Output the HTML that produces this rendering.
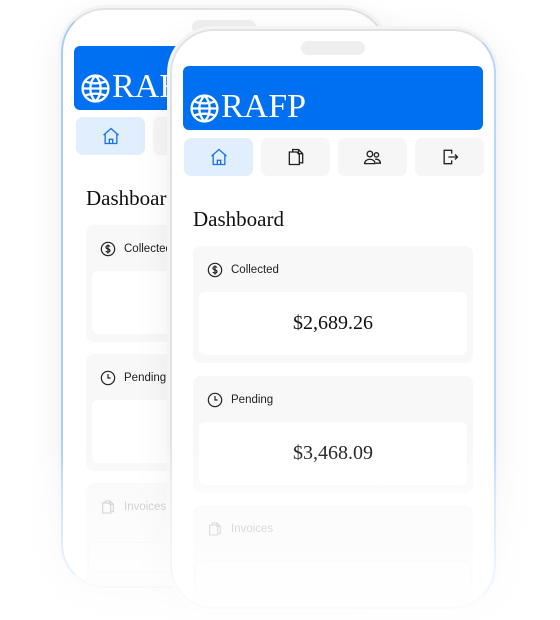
<!DOCTYPE html>
<html><head><style>
*{margin:0;padding:0;box-sizing:border-box}
body{width:560px;height:620px;background:#fff;position:relative;overflow:hidden;font-family:"Liberation Sans",sans-serif}
.ph{position:absolute;width:326px;height:580px;border-radius:44px;background:#fff;border:2px solid #e2e2e2;box-shadow:0 0 0 3px #f4f4f4,0 10px 40px rgba(0,0,0,0.07);overflow:hidden}
.ph>*{position:absolute}
.notch{left:129px;top:10px;width:64px;height:14px;border-radius:7px;background:#efefef}
.hdr{left:11px;top:35px;width:300px;height:64px;background:#0070f3;border-radius:6px;color:#fff;font-family:"Liberation Serif",serif;font-size:34px;line-height:1}
.hdr span{position:absolute;left:38px;top:24px}
.hdr svg{position:absolute;left:6px;top:27px}
.nb{top:107px;width:69px;height:38px;border-radius:7px;background:#f6f6f6;display:flex;align-items:center;justify-content:center}
.nb.a{background:#e0eefd}
.dash{left:21px;top:176px;font-family:"Liberation Serif",serif;font-size:21px;color:#111}
.card{left:21px;width:280px;height:117px;border-radius:8px;background:#f8f8f8}
.card .lb{position:absolute;left:14px;top:16px;display:flex;align-items:center;font-size:11.5px;color:#222}
.card .lb svg{margin-right:8px}
.card .in{position:absolute;left:6px;top:46px;width:268px;height:63px;background:#fff;border-radius:6px;display:flex;align-items:center;justify-content:center;font-family:"Liberation Serif",serif;font-size:20px;color:#111}
.bar{left:23px;top:530px;width:276px;height:30px;border-radius:6px;border:1px solid #eee;background:#fafafa}
.fade{position:absolute;left:0;top:0;width:560px;height:620px;background:linear-gradient(to bottom,rgba(255,255,255,0) 0,rgba(255,255,255,0) 440px,rgba(255,255,255,0.4) 490px,rgba(255,255,255,0.7) 560px,rgba(255,255,255,0.9) 620px);pointer-events:none}
</style></head><body>

<div class="ph" style="left:61px;top:8px;border-left-color:#a8cdf5">
<div class="notch"></div>
<div class="hdr" style="top:36px"><svg width="31" height="31" viewBox="0 0 24 24" fill="none" stroke="#fff" stroke-width="1.8"><circle cx="12" cy="12" r="10"/><path d="M2 12h20M12 2c3 3 4 6 4 10s-1 7-4 10M12 2c-3 3-4 6-4 10s1 7 4 10M4 6.5c5 2 11 2 16 0M4 17.5c5-2 11-2 16 0"/></svg><span>RAFP</span></div>
<div class="nb a" style="left:13px"><svg width="20" height="20" viewBox="0 0 24 24" fill="none" stroke="#1a73e8" stroke-width="1.6"><path d="M3 11l9-8 9 8M5 9.5V21h14V9.5M10 21v-5h4v5"/></svg></div>
<div class="nb" style="left:90px"></div>
<div class="dash" style="left:23px">Dashboard</div>
<div class="card" style="left:23px;top:215px"><div class="lb"><svg width="16" height="16" viewBox="0 0 24 24" fill="none" stroke="#222" stroke-width="1.8"><circle cx="12" cy="12" r="10"/><path d="M15 8.5c-.5-1-1.6-1.5-3-1.5-1.8 0-3 .9-3 2.3 0 3.2 6 1.8 6 5 0 1.4-1.3 2.3-3 2.3-1.5 0-2.6-.6-3.1-1.6M12 5v14"/></svg>Collected</div><div class="in"></div></div>
<div class="card" style="left:23px;top:344px"><div class="lb"><svg width="16" height="16" viewBox="0 0 24 24" fill="none" stroke="#222" stroke-width="1.8"><circle cx="12" cy="12" r="10"/><path d="M12 6v6h4"/></svg>Pending</div><div class="in"></div></div>
<div class="card" style="left:23px;top:473px"><div class="lb" style="color:#aaa"><svg width="16" height="16" viewBox="0 0 24 24" fill="none" stroke="#aaa" stroke-width="1.6"><path d="M8 6V3h7l5 5v11h-4M15 3v5h5M4 6h9l3 3v12H4z"/></svg>Invoices</div></div>
<div class="bar" style="left:25px;top:532px"></div>
</div>

<div class="ph" style="left:170px;top:29px;border-right-color:#b8d6f7">
<div class="notch"></div>
<div class="hdr"><svg width="31" height="31" viewBox="0 0 24 24" fill="none" stroke="#fff" stroke-width="1.8"><circle cx="12" cy="12" r="10"/><path d="M2 12h20M12 2c3 3 4 6 4 10s-1 7-4 10M12 2c-3 3-4 6-4 10s1 7 4 10M4 6.5c5 2 11 2 16 0M4 17.5c5-2 11-2 16 0"/></svg><span>RAFP</span></div>
<div class="nb a" style="left:12px"><svg width="20" height="20" viewBox="0 0 24 24" fill="none" stroke="#1a73e8" stroke-width="1.6"><path d="M3 11l9-8 9 8M5 9.5V21h14V9.5M10 21v-5h4v5"/></svg></div>
<div class="nb" style="left:89px"><svg width="20" height="20" viewBox="0 0 24 24" fill="none" stroke="#222" stroke-width="1.6"><path d="M8 6V3h7l5 5v11h-4M15 3v5h5M4 6h9l3 3v12H4z"/></svg></div>
<div class="nb" style="left:166px"><svg width="21" height="21" viewBox="0 0 24 24" fill="none" stroke="#222" stroke-width="1.5"><circle cx="9" cy="8" r="3.2"/><circle cx="16.5" cy="9" r="2.5"/><path d="M3 19c0-3 2.7-5 6-5s6 2 6 5zM15 14c3.5-.5 6 1.5 6 4.5h-5"/></svg></div>
<div class="nb" style="left:243px"><svg width="20" height="20" viewBox="0 0 24 24" fill="none" stroke="#222" stroke-width="1.6"><path d="M14 8V4H5v16h9v-4M10 12h11M18 9l3 3-3 3"/></svg></div>
<div class="dash">Dashboard</div>
<div class="card" style="top:215px"><div class="lb"><svg width="16" height="16" viewBox="0 0 24 24" fill="none" stroke="#222" stroke-width="1.8"><circle cx="12" cy="12" r="10"/><path d="M15 8.5c-.5-1-1.6-1.5-3-1.5-1.8 0-3 .9-3 2.3 0 3.2 6 1.8 6 5 0 1.4-1.3 2.3-3 2.3-1.5 0-2.6-.6-3.1-1.6M12 5v14"/></svg>Collected</div><div class="in">$2,689.26</div></div>
<div class="card" style="top:345px"><div class="lb"><svg width="16" height="16" viewBox="0 0 24 24" fill="none" stroke="#222" stroke-width="1.8"><circle cx="12" cy="12" r="10"/><path d="M12 6v6h4"/></svg>Pending</div><div class="in">$3,468.09</div></div>
<div class="card" style="top:474px"><div class="lb" style="color:#aaa"><svg width="16" height="16" viewBox="0 0 24 24" fill="none" stroke="#aaa" stroke-width="1.6"><path d="M8 6V3h7l5 5v11h-4M15 3v5h5M4 6h9l3 3v12H4z"/></svg>Invoices</div></div>
<div class="bar"></div>
</div>

<div class="fade"></div>
</body></html>
